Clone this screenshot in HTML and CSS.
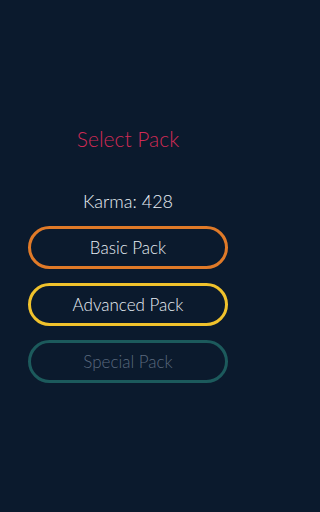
FILE: index.html
```html
<!DOCTYPE html>
<html>
<head>
<meta charset="utf-8">
<link rel="stylesheet" href="styles.css">
</head>
<body>
<main class="screen">
  <h1 class="title">Select Pack</h1>
  <p class="karma">Karma: 428</p>
  <div class="packs">
    <button class="pack pack-basic">Basic Pack</button>
    <button class="pack pack-advanced">Advanced Pack</button>
    <button class="pack pack-special">Special Pack</button>
  </div>
</main>
</body>
</html>
```
FILE: styles.css
```css
html, body {
  margin: 0;
  padding: 0;
  background: #0b1a2d;
}
.screen {
  width: 256px;
  height: 512px;
  display: flex;
  flex-direction: column;
  align-items: center;
  padding-top: 128px;
  box-sizing: border-box;
  font-family: "Lato", "Liberation Sans", sans-serif;
  font-weight: 300;
}
.title {
  margin: 0;
  font-size: 21px;
  line-height: 21px;
  font-weight: 300;
  color: #d02a55;
}
.karma {
  margin: 43px 0 0;
  font-size: 18px;
  line-height: 18px;
  color: #e8eef4;
}
.packs {
  margin-top: 16px;
  display: flex;
  flex-direction: column;
  gap: 14px;
}
.pack {
  width: 200px;
  height: 43px;
  box-sizing: border-box;
  border: 3px solid;
  border-radius: 22px;
  background: transparent;
  font-family: inherit;
  font-weight: 300;
  font-size: 17px;
  line-height: 17px;
  color: #e8eef4;
  padding: 0;
}
.pack-basic { border-color: #e07a28; }
.pack-advanced { border-color: #f0c22c; }
.pack-special { border-color: #1c5a5c; color: #5a697e; }
```
